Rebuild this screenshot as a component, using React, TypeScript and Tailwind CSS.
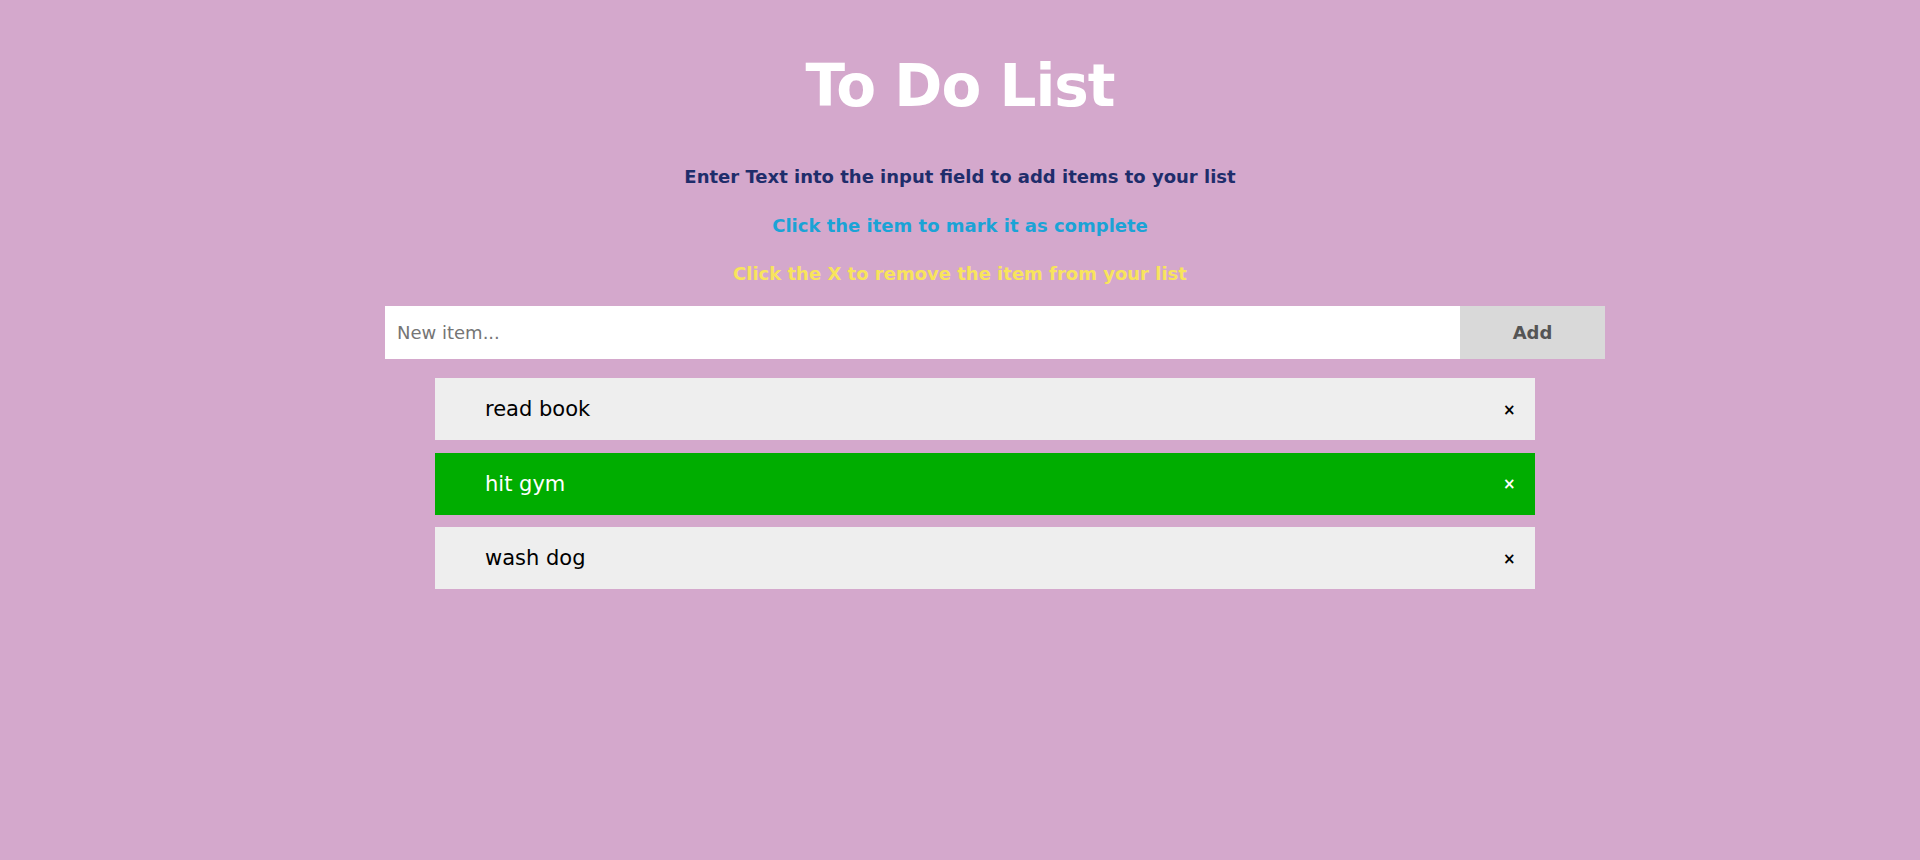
import React from "react";

const items = [
  { text: "read book", done: false },
  { text: "hit gym", done: true },
  { text: "wash dog", done: false },
];

export default function App() {
  return (
    <div
      className="min-h-[860px] w-full bg-[#d4a8cc] flex flex-col"
      style={{ fontFamily: '"Comic Sans MS", "DejaVu Sans", sans-serif' }}
    >
      <h1 className="text-center text-white font-bold text-[58px] leading-[60px] mt-[56px] tracking-[-1px]">
        To Do List
      </h1>
      <div className="flex flex-col items-center mt-[50px] gap-[26.5px] font-bold text-[18px] leading-[22px]">
        <p className="text-[#1f2d6b]">Enter Text into the input field to add items to your list</p>
        <p className="text-[#1ba3d6]">Click the item to mark it as complete</p>
        <p className="text-[#f8e45c]">Click the X to remove the item from your list</p>
      </div>
      <div className="flex ml-[385px] w-[1220px] h-[53px] mt-[21px]">
        <input
          className="flex-1 bg-white h-full px-[12px] text-[18px] text-[#555] placeholder:text-[#757575] outline-none"
          placeholder="New item..."
        />
        <button className="w-[145px] h-full bg-[#d9d9d9] text-[#555] text-[18px] font-bold">Add</button>
      </div>
      <ul className="flex flex-col ml-[435px] w-[1100px] mt-[19px] gap-[12.5px]">
        {items.map((it) => (
          <li
            key={it.text}
            className={`flex items-center justify-between h-[62px] pl-[50px] pr-[20px] pt-[2px] text-[21px] ${
              it.done ? "bg-[#00ad00] text-white" : "bg-[#eeeeee] text-black"
            }`}
          >
            <span>{it.text}</span>
            <span className="w-[12px] text-center text-[15px] font-bold">×</span>
          </li>
        ))}
      </ul>
    </div>
  );
}
